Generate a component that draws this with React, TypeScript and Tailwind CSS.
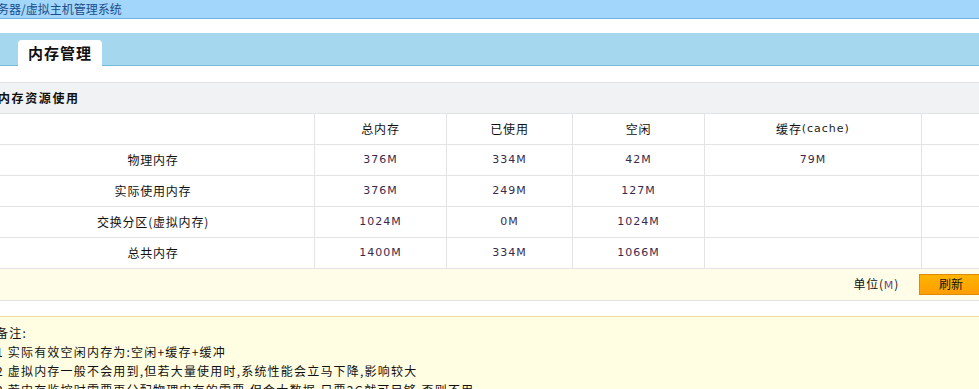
const cjk = "font-['SimSun','Noto_Sans_CJK_SC',sans-serif]";

const rows = [
  { name: '物理内存', total: '376M', used: '334M', free: '42M', cache: '79M' },
  { name: '实际使用内存', total: '376M', used: '249M', free: '127M', cache: '' },
  { name: '交换分区(虚拟内存)', total: '1024M', used: '0M', free: '1024M', cache: '' },
  { name: '总共内存', total: '1400M', used: '334M', free: '1066M', cache: '' },
];

const cols = 'grid grid-cols-[322px_132px_126px_132px_217px_80px]';
const cell = 'flex items-center justify-center border-l border-[#e4e4e6] first:border-l-0';
const num = "font-['DejaVu_Sans',sans-serif] text-[11px] tracking-[1px] text-[#3c2a4d]";

export default function App() {
  return (
    <div className={`w-[979px] h-[389px] overflow-hidden bg-white text-[12px] text-[#111] ${cjk}`}>
      {/* title bar */}
      <div className="h-[19px] bg-[#a2d6fa] border-b border-[#6eb2e2] flex items-center">
        <span className="ml-[-15px] text-[#1a4d8e] whitespace-nowrap">服务器/虚拟主机管理系统</span>
      </div>

      <div className="h-[14px]" />

      {/* tab band */}
      <div className="h-[33px] bg-[#a5d8ee] border-b border-[#77b9da] flex items-end pl-[18px]">
        <div className="w-[84px] h-[26px] bg-white rounded-t-[4px] flex items-center justify-center text-[15px] font-bold tracking-[1px] mb-[-1px]">
          内存管理
        </div>
      </div>

      <div className="h-[16px]" />

      {/* section header */}
      <div className="h-[32px] bg-[#f1f2f4] border-t border-b border-[#e2e3e5] flex items-center">
        <span className="ml-[-2px] font-bold tracking-[1.6px]">内存资源使用</span>
      </div>

      {/* table */}
      <div className="ml-[-8px]">
        <div className={`${cols} h-[31px] border-b border-[#e4e4e6]`}>
          <div className={cell} />
          <div className={`${cell} tracking-[0.8px]`}>总内存</div>
          <div className={`${cell} tracking-[0.8px]`}>已使用</div>
          <div className={`${cell} tracking-[0.8px]`}>空闲</div>
          <div className={`${cell} tracking-[0.8px]`}>
            缓存<span className="font-['DejaVu_Sans',sans-serif] text-[11px] tracking-[1px] text-[#222]">(cache)</span>
          </div>
          <div className={cell} />
        </div>
        {rows.map((r) => (
          <div key={r.name} className={`${cols} h-[31px] border-b border-[#e4e4e6]`}>
            <div className={`${cell} tracking-[0.8px]`}>{r.name}</div>
            <div className={`${cell} ${num}`}>{r.total}</div>
            <div className={`${cell} ${num}`}>{r.used}</div>
            <div className={`${cell} ${num}`}>{r.free}</div>
            <div className={`${cell} ${num}`}>{r.cache}</div>
            <div className={cell} />
          </div>
        ))}
      </div>

      {/* footer */}
      <div className="h-[32px] bg-[#fffde8] border-b border-[#e3e3e3] flex items-center justify-end">
        <span className="tracking-[0.8px]">
          单位(<span className="font-['DejaVu_Sans',sans-serif] text-[11px] text-[#7a3d8a]">M</span>)
        </span>
        <button className="ml-[20px] mr-[-4px] w-[64px] h-[21px] bg-gradient-to-b from-[#ffb400] to-[#ff9d00] border border-[#e08a00] text-[12px] text-[#111] flex items-start justify-center">
          刷新
        </button>
      </div>

      <div className="h-[15px]" />

      {/* notes */}
      <div className="bg-[#fffee3] border-t border-[#f0dda0] pt-[6px] h-[80px]">
        <div className="ml-[-4px] leading-[19px] tracking-[1.2px] whitespace-nowrap">
          <div>备注:</div>
          <div>1 实际有效空闲内存为:空闲+缓存+缓冲</div>
          <div>2 虚拟内存一般不会用到,但若大量使用时,系统性能会立马下降,影响较大</div>
          <div>3 若内存监控时需要再分配物理内存的需要,但会大数据,只要2G就可足够,否则不用</div>
        </div>
      </div>
    </div>
  );
}
